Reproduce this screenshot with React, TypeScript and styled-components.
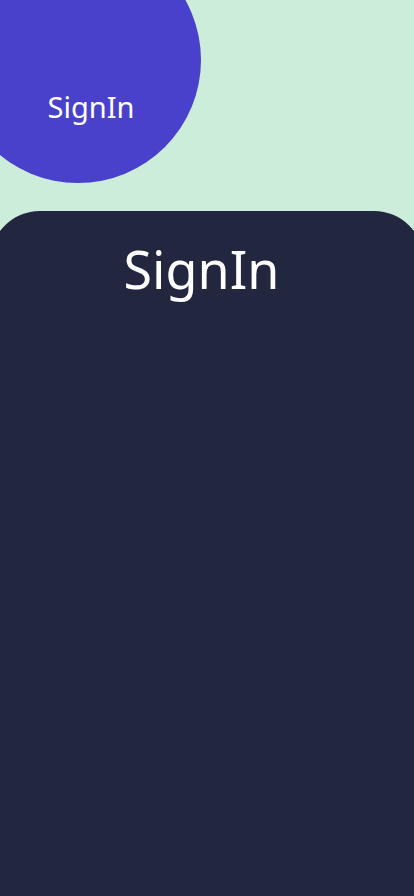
import styled, { createGlobalStyle } from 'styled-components';

const GlobalStyle = createGlobalStyle`
	html, body {
		margin: 0;
		padding: 0;
		background: #cdeddb;
		overflow: hidden;
	}
	* {
		box-sizing: border-box;
	}
`;

const Page = styled.div`
	display: flex;
	flex-direction: column;
	min-height: 100vh;
	font-family: 'Noto Sans', 'Open Sans', sans-serif;
	overflow: hidden;
`;

const Header = styled.div`
	height: 211px;
	flex-shrink: 0;
`;

const Circle = styled.div`
	width: 246px;
	height: 246px;
	margin: -63px 0 0 -45px;
	border-radius: 50%;
	background: #4941cc;
	display: flex;
	align-items: flex-end;
	justify-content: center;
	padding: 0 0 62px 26px;
`;

const CircleLabel = styled.span`
	color: #ffffff;
	font-size: 29px;
	line-height: 1;
`;

const Card = styled.div`
	flex: 1;
	margin: 0 -10px;
	background: #22273f;
	border-radius: 50px 50px 0 0;
	display: flex;
	flex-direction: column;
	align-items: center;
	padding: 32px 11px 0 0;
`;

const Title = styled.h1`
	margin: 0;
	color: #ffffff;
	font-size: 52px;
	font-weight: 400;
	line-height: 1;
`;

function App() {
	return (
		<Page>
			<GlobalStyle />
			<Header>
				<Circle>
					<CircleLabel>SignIn</CircleLabel>
				</Circle>
			</Header>
			<Card>
				<Title>SignIn</Title>
			</Card>
		</Page>
	);
}

export default App;
